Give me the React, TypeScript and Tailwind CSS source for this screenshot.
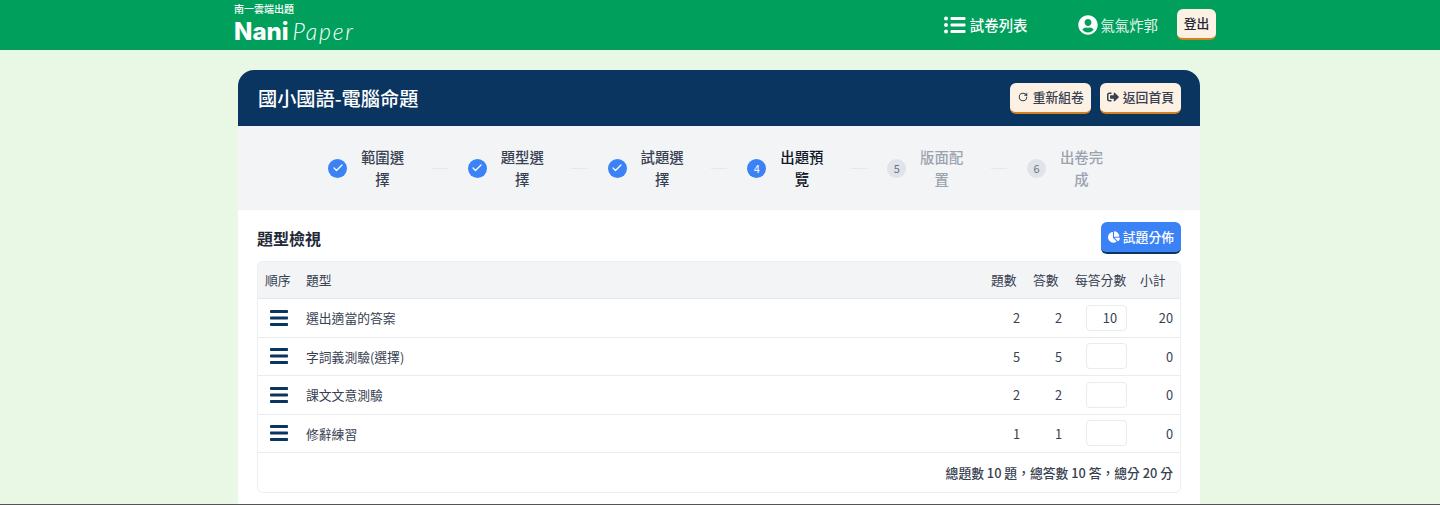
import { Check, RotateCw } from "lucide-react"
import { FaChartPie, FaSignOutAlt, FaUserCircle } from "react-icons/fa"

const steps = [
  { label: "範圍選擇", state: "done" },
  { label: "題型選擇", state: "done" },
  { label: "試題選擇", state: "done" },
  { label: "出題預覽", state: "current" },
  { label: "版面配置", state: "todo" },
  { label: "出卷完成", state: "todo" },
]

const rows = [
  { name: "選出適當的答案", count: 2, answers: 2, score: "10", total: 20 },
  { name: "字詞義測驗(選擇)", count: 5, answers: 5, score: "", total: 0 },
  { name: "課文文意測驗", count: 2, answers: 2, score: "", total: 0 },
  { name: "修辭練習", count: 1, answers: 1, score: "", total: 0 },
]

const gridCols = "grid grid-cols-[41px_1fr_42px_42px_65px_47px] items-center"

function ListIcon() {
  return (
    <svg width="22" height="18" viewBox="0 0 22 18" fill="white">
      <circle cx="2" cy="2.5" r="2" />
      <circle cx="2" cy="9" r="2" />
      <circle cx="2" cy="15.5" r="2" />
      <rect x="6.5" y="1" width="15" height="3" rx="1" />
      <rect x="6.5" y="7.5" width="15" height="3" rx="1" />
      <rect x="6.5" y="14" width="15" height="3" rx="1" />
    </svg>
  )
}

function DragHandle() {
  return (
    <svg width="18" height="16" viewBox="0 0 18 16" fill="#0b3561">
      <rect x="0" y="0" width="18" height="3" rx="0.8" />
      <rect x="0" y="6.5" width="18" height="3" rx="0.8" />
      <rect x="0" y="13" width="18" height="3" rx="0.8" />
    </svg>
  )
}

function Step({ label, state, last }: { label: string; state: string; last: boolean }) {
  return (
    <div className="flex items-center">
      {state === "done" && (
        <div className="flex h-[19px] w-[19px] items-center justify-center rounded-full bg-[#3b82f6] text-white">
          <Check size={12} strokeWidth={2.5} />
        </div>
      )}
      {state === "current" && (
        <div className="flex h-[19px] w-[19px] items-center justify-center rounded-full bg-[#3b82f6] text-[11px] text-white">4</div>
      )}
      {state === "todo" && (
        <div className="flex h-[19px] w-[19px] items-center justify-center rounded-full bg-[#e0e3e9] text-[11px] text-[#6b7280]">
          {label === "版面配置" ? 5 : 6}
        </div>
      )}
      <div
        className={
          "ml-[13.5px] w-[44px] text-center text-[14.4px] font-medium leading-[22.5px] " +
          (state === "todo" ? "text-[#9ca3af]" : state === "current" ? "text-[#111827]" : "text-[#374151]")
        }
      >
        {label}
      </div>
      {!last && <div className="ml-[27px] mr-[20.3px] h-px w-[16px] bg-[#e5e7eb]" />}
    </div>
  )
}

export default function App() {
  return (
    <div className="flex h-[505px] flex-col overflow-hidden bg-[#e9f8e5] font-['Noto_Sans_CJK_TC','Noto_Sans',sans-serif] text-[#374151]">
      <header className="flex h-[50px] shrink-0 items-center justify-between bg-[#00a05c] pl-[234px] pr-[224px] text-white">
        <div className="mb-[4px] flex flex-col">
          <div className="text-[10px] font-medium leading-[14px]">南一雲端出題</div>
          <div className="mt-[2px] flex items-baseline leading-[26px]">
            <span className="font-['Inter',sans-serif] text-[24px] font-extrabold">Nani</span>
            <span className="ml-[4px] font-['Lato',sans-serif] text-[23px] font-light italic tracking-[1.8px]">Paper</span>
          </div>
        </div>
        <div className="flex items-center">
          <ListIcon />
          <span className="ml-[4px] text-[14.4px] font-medium">試卷列表</span>
          <FaUserCircle size={20} className="ml-[51px]" />
          <span className="ml-[2px] text-[14.4px] text-[#e3f5ea]">氣氣炸郭</span>
          <button className="mb-[2px] ml-[19px] h-[31px] w-[39px] rounded-md border-b-2 border-[#d4811f] bg-[#fdf1e3] text-[12.8px] font-medium text-[#1f2937]">
            登出
          </button>
        </div>
      </header>

      <main className="ml-[238px] mt-[20px] flex w-[962px] flex-1 flex-col overflow-hidden rounded-t-[16px] bg-white">
        <div className="flex h-[56px] shrink-0 items-center justify-between bg-[#0b3561] pl-[20px] pr-[19px]">
          <h1 className="text-[19.2px] font-medium text-white">國小國語-電腦命題</h1>
          <div className="flex gap-[9px]">
            <button className="flex h-[31px] items-center rounded-md border-b-2 border-[#d4811f] bg-[#fdf1e3] px-[7px] text-[12.8px] font-medium text-[#374151]">
              <RotateCw size={10} strokeWidth={2.5} className="mx-[1px]" />
              <span className="ml-[4px]">重新組卷</span>
            </button>
            <button className="flex h-[31px] items-center rounded-md border-b-2 border-[#d4811f] bg-[#fdf1e3] px-[7px] text-[12.8px] font-medium text-[#374151]">
              <FaSignOutAlt size={12} />
              <span className="ml-[4px]">返回首頁</span>
            </button>
          </div>
        </div>

        <div className="flex h-[84px] shrink-0 items-center bg-[#f3f4f6] pl-[90px]">
          {steps.map((s, i) => (
            <Step key={s.label} label={s.label} state={s.state} last={i === steps.length - 1} />
          ))}
        </div>

        <div className="flex flex-col px-[19px]">
          <div className="flex h-[51px] items-center justify-between pt-[4px]">
            <h2 className="text-[16px] font-bold text-[#1f2937]">題型檢視</h2>
            <button className="flex h-[32px] items-center rounded-md border-b-2 border-[#0b3561] bg-[#3b82f6] px-[7px] text-[12.8px] font-medium text-white">
              <FaChartPie size={12} />
              <span className="ml-[3px]">試題分佈</span>
            </button>
          </div>

          <div className="rounded-md border border-[#eceef1] text-[12.8px]">
            <div className={gridCols + " h-[37px] border-b border-[#e5e7eb] bg-[#f3f4f6] text-[#374151]"}>
              <div className="pl-[7px]">順序</div>
              <div className="pl-[7px]">題型</div>
              <div className="pl-[7px]">題數</div>
              <div className="pl-[7px]">答數</div>
              <div className="pl-[7px]">每答分數</div>
              <div className="pl-[7px]">小計</div>
            </div>
            {rows.map((r) => (
              <div key={r.name} className={gridCols + " h-[38.5px] border-b border-[#e9ebee]"}>
                <div className="flex justify-center pl-[1px]">
                  <DragHandle />
                </div>
                <div className="pl-[7px]">{r.name}</div>
                <div className="pr-[6px] text-right">{r.count}</div>
                <div className="pr-[6px] text-right">{r.answers}</div>
                <div className="flex justify-end pr-[6px]">
                  <input
                    readOnly
                    value={r.score}
                    className="h-[26px] w-[41px] rounded border border-[#e9ebee] bg-white px-[9px] text-right text-[12.8px] text-[#374151] outline-none"
                  />
                </div>
                <div className="pr-[7px] text-right">{r.total}</div>
              </div>
            ))}
            <div className="flex h-[39px] items-center justify-end pr-[7px] font-medium text-[#374151]">
              總題數 10 題，總答數 10 答，總分 20 分
            </div>
          </div>
        </div>
      </main>
      <div className="h-px shrink-0 bg-[#555555]" />
    </div>
  )
}
